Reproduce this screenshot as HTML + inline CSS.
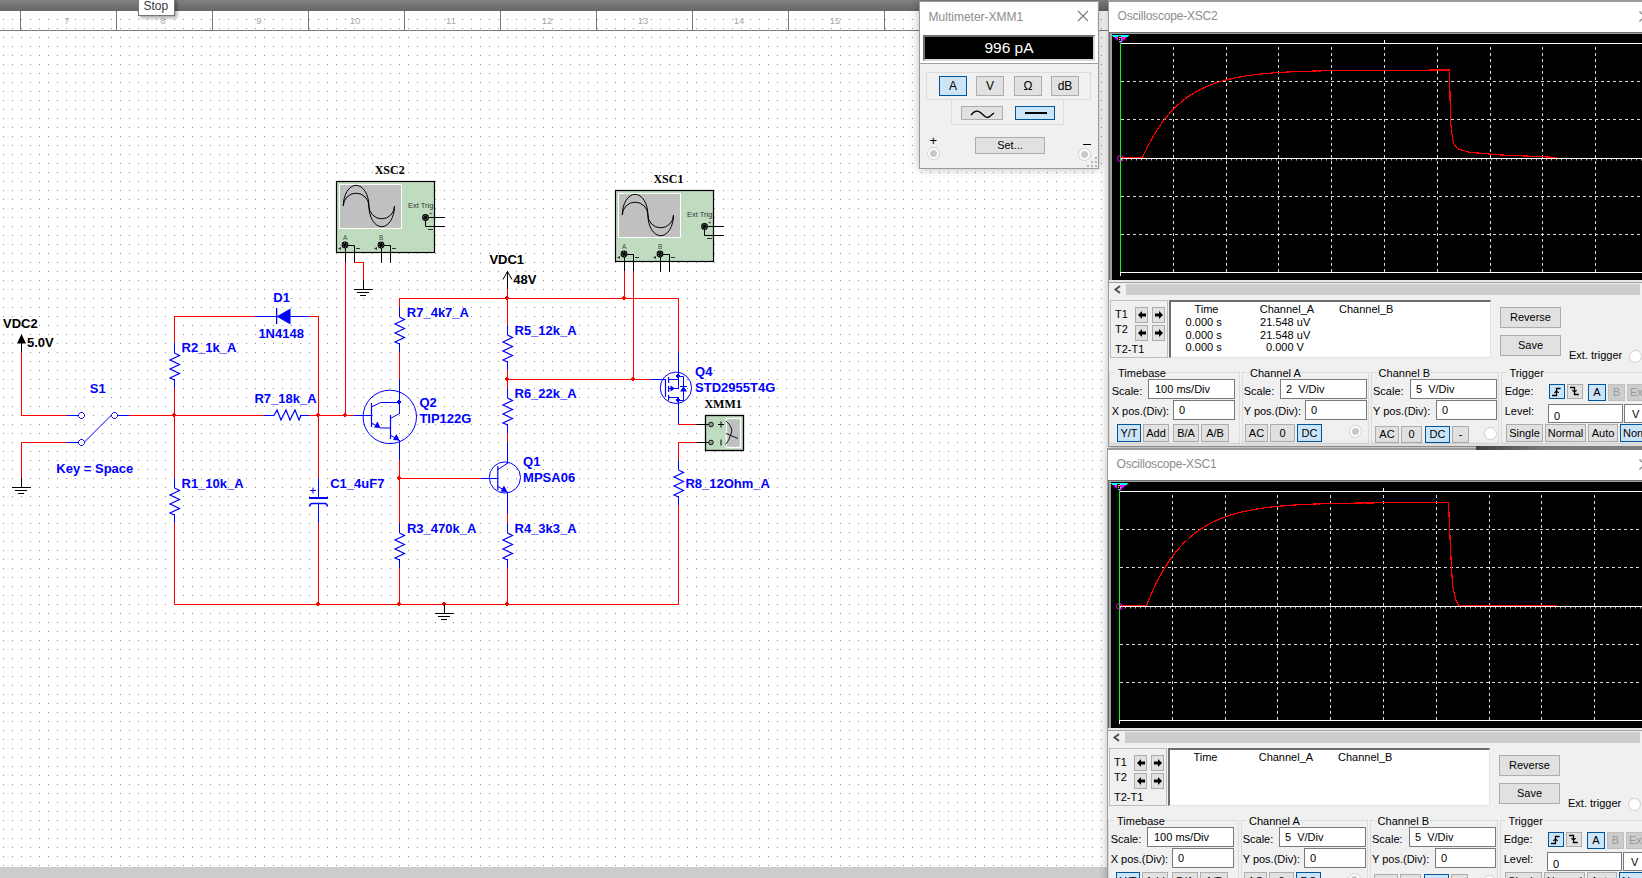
<!DOCTYPE html><html><head><meta charset="utf-8"><style>
html,body{margin:0;padding:0;}
body{width:1642px;height:878px;overflow:hidden;position:relative;background:#fff;font-family:"Liberation Sans",sans-serif;}
.win{position:absolute;background:#f0f0f0;box-sizing:border-box;box-shadow:0 0 9px rgba(0,0,0,0.28);overflow:hidden}
.wb{position:absolute;left:0;top:0;right:0;bottom:0;border:1px solid #9a9a9a;pointer-events:none}
.title{position:absolute;background:#fff}
.t{position:absolute;white-space:pre;font-family:"Liberation Sans",sans-serif;}
.b{position:absolute;box-sizing:border-box;background:#e1e1e1;border:1px solid #adadad;text-align:center;color:#000;font-family:"Liberation Sans",sans-serif;white-space:pre;overflow:hidden}
.b.sel{background:#cce4f7;border:1px solid #005499}
.b.dis{background:#cccccc;border:1px solid #bfbfbf;color:#9a9a9a}
.inp{position:absolute;box-sizing:border-box;background:#fff;border:1px solid #7a7a7a;font-size:11px;color:#000;white-space:pre}
.gb{position:absolute;box-sizing:border-box;border:1px solid #dcdcdc}
.gbgap{position:absolute;background:#f0f0f0}
.gp{position:absolute;box-sizing:border-box;border:1px solid #dcdcdc}
.panel{position:absolute;box-sizing:border-box;border:1px solid #bdbdbd}
.data{position:absolute;box-sizing:border-box;background:#fff;border-left:2px solid #6d6d6d;border-top:2px solid #6d6d6d;border-right:1px solid #e3e3e3;border-bottom:1px solid #e3e3e3}
.radio{position:absolute;box-sizing:border-box;width:13px;height:13px;border-radius:50%;background:#fff;border:1px solid #cfcfcf}
</style></head><body>
<svg width="1642" height="878" style="position:absolute;left:0;top:0">
<defs><linearGradient id="tb" x1="0" y1="0" x2="0" y2="1"><stop offset="0" stop-color="#828282"/><stop offset="1" stop-color="#666"/></linearGradient><pattern id="grid" width="9" height="9" patternUnits="userSpaceOnUse"><rect x="3" y="1" width="1" height="1" fill="#8e8e8e"/></pattern></defs>
<rect x="0" y="0" width="1642" height="878" fill="url(#grid)"/>
<rect x="0" y="0" width="1642" height="11" fill="url(#tb)"/>
<rect x="0" y="30" width="1642" height="1" fill="#7a7a7a"/>
<rect x="20" y="11" width="1" height="19" fill="#7a7a7a"/>
<text x="67" y="23.5" fill="#a8a8a8" font-family="Liberation Sans" font-size="9.5" text-anchor="middle">7</text>
<rect x="116" y="11" width="1" height="19" fill="#7a7a7a"/>
<text x="163" y="23.5" fill="#a8a8a8" font-family="Liberation Sans" font-size="9.5" text-anchor="middle">8</text>
<rect x="212" y="11" width="1" height="19" fill="#7a7a7a"/>
<text x="259" y="23.5" fill="#a8a8a8" font-family="Liberation Sans" font-size="9.5" text-anchor="middle">9</text>
<rect x="308" y="11" width="1" height="19" fill="#7a7a7a"/>
<text x="355" y="23.5" fill="#a8a8a8" font-family="Liberation Sans" font-size="9.5" text-anchor="middle">10</text>
<rect x="404" y="11" width="1" height="19" fill="#7a7a7a"/>
<text x="451" y="23.5" fill="#a8a8a8" font-family="Liberation Sans" font-size="9.5" text-anchor="middle">11</text>
<rect x="500" y="11" width="1" height="19" fill="#7a7a7a"/>
<text x="547" y="23.5" fill="#a8a8a8" font-family="Liberation Sans" font-size="9.5" text-anchor="middle">12</text>
<rect x="596" y="11" width="1" height="19" fill="#7a7a7a"/>
<text x="643" y="23.5" fill="#a8a8a8" font-family="Liberation Sans" font-size="9.5" text-anchor="middle">13</text>
<rect x="692" y="11" width="1" height="19" fill="#7a7a7a"/>
<text x="739" y="23.5" fill="#a8a8a8" font-family="Liberation Sans" font-size="9.5" text-anchor="middle">14</text>
<rect x="788" y="11" width="1" height="19" fill="#7a7a7a"/>
<text x="835" y="23.5" fill="#a8a8a8" font-family="Liberation Sans" font-size="9.5" text-anchor="middle">15</text>
<rect x="884" y="11" width="1" height="19" fill="#7a7a7a"/>
<text x="931" y="23.5" fill="#a8a8a8" font-family="Liberation Sans" font-size="9.5" text-anchor="middle">16</text>
<rect x="980" y="11" width="1" height="19" fill="#7a7a7a"/>
<text x="1027" y="23.5" fill="#a8a8a8" font-family="Liberation Sans" font-size="9.5" text-anchor="middle">17</text>
<rect x="1076" y="11" width="1" height="19" fill="#7a7a7a"/>
<text x="1123" y="23.5" fill="#a8a8a8" font-family="Liberation Sans" font-size="9.5" text-anchor="middle">18</text>
<rect x="0" y="867" width="1642" height="11" fill="#cdcdcd"/>
<text x="3" y="327.7" fill="#000000" font-family="Liberation Sans" font-size="13" font-weight="bold">VDC2</text>
<polygon points="21.5,334 17,343.5 26,343.5" fill="#000"/>
<polyline points="21.5,343.5 21.5,352.5" fill="none" stroke="#000000" stroke-width="1" stroke-linecap="square"/>
<text x="27" y="346.8" fill="#000000" font-family="Liberation Sans" font-size="13" font-weight="bold">5.0V</text>
<polyline points="21.5,352.5 21.5,415.5 66.5,415.5" fill="none" stroke="#ff0000" stroke-width="1" stroke-linecap="square"/>
<polyline points="67.5,415.5 78.5,415.5" fill="none" stroke="#0000ff" stroke-width="1" stroke-linecap="square"/>
<polygon points="78.5,414.5 80.5,412.5 82.5,412.5 84.5,414.5 84.5,416.5 82.5,418.5 80.5,418.5 78.5,416.5" fill="#fff" stroke="#0000ff" stroke-width="1"/>
<polygon points="111.5,414.5 113.5,412.5 115.5,412.5 117.5,414.5 117.5,416.5 115.5,418.5 113.5,418.5 111.5,416.5" fill="#fff" stroke="#0000ff" stroke-width="1"/>
<polygon points="78.5,441.5 80.5,439.5 82.5,439.5 84.5,441.5 84.5,443.5 82.5,445.5 80.5,445.5 78.5,443.5" fill="#fff" stroke="#0000ff" stroke-width="1"/>
<line x1="84.5" y1="442" x2="111.5" y2="415" stroke="#0000ff" stroke-width="1"/>
<polyline points="117.5,415.5 129.5,415.5" fill="none" stroke="#0000ff" stroke-width="1" stroke-linecap="square"/>
<polyline points="21.5,478.5 21.5,442.5 66.5,442.5" fill="none" stroke="#ff0000" stroke-width="1" stroke-linecap="square"/>
<polyline points="67.5,442.5 78.5,442.5" fill="none" stroke="#0000ff" stroke-width="1" stroke-linecap="square"/>
<polyline points="21.5,478.5 21.5,487.5" fill="none" stroke="#000000" stroke-width="1" stroke-linecap="square"/>
<rect x="12" y="487" width="19" height="1" fill="#000"/>
<rect x="15" y="490" width="12" height="1" fill="#000"/>
<rect x="18" y="493" width="6" height="1" fill="#000"/>
<text x="89.8" y="393.3" fill="#0000ff" font-family="Liberation Sans" font-size="13" font-weight="bold">S1</text>
<text x="56.3" y="473.2" fill="#0000ff" font-family="Liberation Sans" font-size="13" font-weight="bold">Key = Space</text>
<polyline points="129.5,415.5 264.5,415.5" fill="none" stroke="#ff0000" stroke-width="1" stroke-linecap="square"/>
<polyline points="264.5,415.5 273.5,415.5" fill="none" stroke="#0000ff" stroke-width="1" stroke-linecap="square"/>
<polyline points="274.0,415.5 277.0,410.0 281.0,420.0 286.0,410.0 290.0,420.0 295.0,410.0 299.0,420.0 301.0,415.5" fill="none" stroke="#0000ff" stroke-width="1.2"/>
<polyline points="300.5,415.5 309.5,415.5" fill="none" stroke="#0000ff" stroke-width="1" stroke-linecap="square"/>
<polyline points="309.5,415.5 354.5,415.5" fill="none" stroke="#ff0000" stroke-width="1" stroke-linecap="square"/>
<polyline points="174.5,316.5 174.5,343.5" fill="none" stroke="#ff0000" stroke-width="1" stroke-linecap="square"/>
<polyline points="174.5,343.5 174.5,352.5" fill="none" stroke="#0000ff" stroke-width="1" stroke-linecap="square"/>
<polyline points="174.5,353.0 179.5,355.5 170.0,360.0 179.5,364.5 170.0,369.0 179.5,373.5 170.0,378.0 174.5,380.0" fill="none" stroke="#0000ff" stroke-width="1.2"/>
<polyline points="174.5,379.5 174.5,388.5" fill="none" stroke="#0000ff" stroke-width="1" stroke-linecap="square"/>
<polyline points="174.5,388.5 174.5,478.5" fill="none" stroke="#ff0000" stroke-width="1" stroke-linecap="square"/>
<polyline points="174.5,478.5 174.5,487.5" fill="none" stroke="#0000ff" stroke-width="1" stroke-linecap="square"/>
<polyline points="174.5,488.0 179.5,490.5 170.0,495.0 179.5,499.5 170.0,504.0 179.5,508.5 170.0,513.0 174.5,515.0" fill="none" stroke="#0000ff" stroke-width="1.2"/>
<polyline points="174.5,514.5 174.5,523.5" fill="none" stroke="#0000ff" stroke-width="1" stroke-linecap="square"/>
<polyline points="174.5,523.5 174.5,604.5 678.5,604.5" fill="none" stroke="#ff0000" stroke-width="1" stroke-linecap="square"/>
<text x="181.5" y="352.3" fill="#0000ff" font-family="Liberation Sans" font-size="13" font-weight="bold">R2_1k_A</text>
<text x="181.5" y="487.5" fill="#0000ff" font-family="Liberation Sans" font-size="13" font-weight="bold">R1_10k_A</text>
<text x="254.4" y="403.3" fill="#0000ff" font-family="Liberation Sans" font-size="13" font-weight="bold">R7_18k_A</text>
<polyline points="174.5,316.5 255.5,316.5" fill="none" stroke="#ff0000" stroke-width="1" stroke-linecap="square"/>
<polyline points="255.5,316.5 309.5,316.5" fill="none" stroke="#0000ff" stroke-width="1" stroke-linecap="square"/>
<polygon points="276.5,316.5 290.5,308.5 290.5,324.5" fill="#0000ff"/>
<rect x="276" y="308" width="1.3" height="16" fill="#0000ff"/>
<polyline points="309.5,316.5 318.5,316.5 318.5,478.5" fill="none" stroke="#ff0000" stroke-width="1" stroke-linecap="square"/>
<text x="273.3" y="302" fill="#0000ff" font-family="Liberation Sans" font-size="13" font-weight="bold">D1</text>
<text x="258.4" y="337.9" fill="#0000ff" font-family="Liberation Sans" font-size="13" font-weight="bold">1N4148</text>
<polyline points="318.5,478.5 318.5,497.5" fill="none" stroke="#0000ff" stroke-width="1" stroke-linecap="square"/>
<rect x="309" y="497" width="19" height="2" fill="#0000ff"/>
<path d="M309.5,506.5 Q310,503.5 312,503.5 L325,503.5 Q327,503.5 327.5,506.5" fill="none" stroke="#0000ff" stroke-width="1.6"/>
<polyline points="318.5,504.5 318.5,523.5" fill="none" stroke="#0000ff" stroke-width="1" stroke-linecap="square"/>
<polyline points="318.5,523.5 318.5,604.5" fill="none" stroke="#ff0000" stroke-width="1" stroke-linecap="square"/>
<rect x="310" y="490" width="6" height="1" fill="#0000ff"/><rect x="312.5" y="487.5" width="1" height="6" fill="#0000ff"/>
<text x="330.2" y="487.5" fill="#0000ff" font-family="Liberation Sans" font-size="13" font-weight="bold">C1_4uF7</text>
<rect x="336.5" y="181.5" width="98" height="71" fill="#c0dcc0" stroke="#000" stroke-width="1.2"/>
<rect x="339.5" y="184.5" width="62" height="44" fill="#c0c0c0" stroke="#fff" stroke-width="1"/>
<path d="M343.3,206 A12.8,20.7 0 0 1 368.90000000000003,206 A12.8,20.7 0 0 0 394.5,206" fill="none" stroke="#000" stroke-width="1"/>
<path d="M343.3,206 A12.8,12.8 0 0 1 368.90000000000003,206 A12.8,12.8 0 0 0 394.5,206" fill="none" stroke="#000" stroke-width="1"/>
<text x="408" y="208" fill="#333" font-family="Liberation Sans" font-size="7.5">Ext Trig</text>
<polyline points="425.5,217.5 444.5,217.5" fill="none" stroke="#000000" stroke-width="1" stroke-linecap="square"/>
<polyline points="425.5,217.5 425.5,226.5 444.5,226.5" fill="none" stroke="#000000" stroke-width="1" stroke-linecap="square"/>
<circle cx="425.5" cy="217.5" r="3.4" fill="#000"/><circle cx="425.5" cy="217.5" r="2.1" fill="none" stroke="#d0d0d0" stroke-width="0.7" stroke-dasharray="1,1"/>
<text x="429" y="215" fill="#333" font-family="Liberation Sans" font-size="6">+</text>
<rect x="428" y="229" width="5" height="1" fill="#333"/>
<text x="343" y="240" fill="#444" font-family="Liberation Sans" font-size="6.5">A</text>
<polyline points="345.5,245.5 354.5,245.5 354.5,262.5" fill="none" stroke="#000000" stroke-width="1" stroke-linecap="square"/>
<polyline points="345.5,245.5 345.5,262.5" fill="none" stroke="#000000" stroke-width="1" stroke-linecap="square"/>
<circle cx="345" cy="245" r="3.4" fill="#000"/><circle cx="345" cy="245" r="2.1" fill="none" stroke="#d0d0d0" stroke-width="0.7" stroke-dasharray="1,1"/>
<polygon points="338,248.5 341,247 341,250" fill="#333"/>
<rect x="356" y="248" width="4" height="1" fill="#333"/>
<text x="379" y="240" fill="#444" font-family="Liberation Sans" font-size="6.5">B</text>
<polyline points="381.5,245.5 390.5,245.5 390.5,262.5" fill="none" stroke="#000000" stroke-width="1" stroke-linecap="square"/>
<polyline points="381.5,245.5 381.5,262.5" fill="none" stroke="#000000" stroke-width="1" stroke-linecap="square"/>
<circle cx="381" cy="245" r="3.4" fill="#000"/><circle cx="381" cy="245" r="2.1" fill="none" stroke="#d0d0d0" stroke-width="0.7" stroke-dasharray="1,1"/>
<polygon points="374,248.5 377,247 377,250" fill="#333"/>
<rect x="392" y="248" width="4" height="1" fill="#333"/>
<text x="374.7" y="173.9" fill="#000" font-family="Liberation Serif" font-size="12" font-weight="bold">XSC2</text>
<polyline points="345.5,262.5 345.5,415.5" fill="none" stroke="#ff0000" stroke-width="1" stroke-linecap="square"/>
<polyline points="354.5,262.5 363.5,262.5 363.5,280.5" fill="none" stroke="#ff0000" stroke-width="1" stroke-linecap="square"/>
<polyline points="363.5,280.5 363.5,289.5" fill="none" stroke="#000000" stroke-width="1" stroke-linecap="square"/>
<rect x="354" y="289" width="19" height="1" fill="#000"/>
<rect x="357" y="292" width="12" height="1" fill="#000"/>
<rect x="360" y="295" width="6" height="1" fill="#000"/>
<polyline points="399.5,298.5 678.5,298.5" fill="none" stroke="#ff0000" stroke-width="1" stroke-linecap="square"/>
<polyline points="399.5,298.5 399.5,307.5" fill="none" stroke="#ff0000" stroke-width="1" stroke-linecap="square"/>
<polyline points="399.5,307.5 399.5,316.5" fill="none" stroke="#0000ff" stroke-width="1" stroke-linecap="square"/>
<polyline points="399.5,317.0 404.5,319.5 395.0,324.0 404.5,328.5 395.0,333.0 404.5,337.5 395.0,342.0 399.5,344.0" fill="none" stroke="#0000ff" stroke-width="1.2"/>
<polyline points="399.5,343.5 399.5,352.5" fill="none" stroke="#0000ff" stroke-width="1" stroke-linecap="square"/>
<polyline points="399.5,352.5 399.5,379.5" fill="none" stroke="#ff0000" stroke-width="1" stroke-linecap="square"/>
<text x="406.8" y="317" fill="#0000ff" font-family="Liberation Sans" font-size="13" font-weight="bold">R7_4k7_A</text>
<circle cx="389.8" cy="416.9" r="26.7" fill="none" stroke="#0000ff" stroke-width="1"/>
<polyline points="354.5,415.5 371.5,415.5" fill="none" stroke="#0000ff" stroke-width="1" stroke-linecap="square"/>
<line x1="371.5" y1="403" x2="371.5" y2="427" stroke="#0000ff" stroke-width="1.2"/>
<polyline points="399.5,379.5 399.5,413.5" fill="none" stroke="#0000ff" stroke-width="1" stroke-linecap="square"/>
<polyline points="371.5,407 380.5,402.5 399.5,402.5" fill="none" stroke="#0000ff" stroke-width="1"/>
<line x1="399.5" y1="413.5" x2="390" y2="418.7" stroke="#0000ff" stroke-width="1"/>
<line x1="390.5" y1="415" x2="390.5" y2="439" stroke="#0000ff" stroke-width="1.2"/>
<polyline points="371.5,423 380.5,428 390.5,428" fill="none" stroke="#0000ff" stroke-width="1"/>
<polygon points="380.5,428 374,427.5 377.5,421.5" fill="#0000ff"/>
<line x1="390.5" y1="435.3" x2="399.5" y2="440.5" stroke="#0000ff" stroke-width="1"/>
<polygon points="399.5,440.5 393,440 396.5,434" fill="#0000ff"/>
<rect x="398" y="400" width="2" height="4" fill="#0000ff"/><rect x="397" y="401" width="4" height="2" fill="#0000ff"/>
<polyline points="399.5,440.5 399.5,460.5" fill="none" stroke="#0000ff" stroke-width="1" stroke-linecap="square"/>
<polyline points="399.5,460.5 399.5,523.5" fill="none" stroke="#ff0000" stroke-width="1" stroke-linecap="square"/>
<polyline points="399.5,523.5 399.5,532.5" fill="none" stroke="#0000ff" stroke-width="1" stroke-linecap="square"/>
<polyline points="399.5,533.0 404.5,535.5 395.0,540.0 404.5,544.5 395.0,549.0 404.5,553.5 395.0,558.0 399.5,560.0" fill="none" stroke="#0000ff" stroke-width="1.2"/>
<polyline points="399.5,559.5 399.5,568.5" fill="none" stroke="#0000ff" stroke-width="1" stroke-linecap="square"/>
<polyline points="399.5,568.5 399.5,604.5" fill="none" stroke="#ff0000" stroke-width="1" stroke-linecap="square"/>
<text x="419.4" y="407.2" fill="#0000ff" font-family="Liberation Sans" font-size="13" font-weight="bold">Q2</text>
<text x="419.4" y="423.3" fill="#0000ff" font-family="Liberation Sans" font-size="13" font-weight="bold">TIP122G</text>
<text x="406.9" y="532.5" fill="#0000ff" font-family="Liberation Sans" font-size="13" font-weight="bold">R3_470k_A</text>
<polyline points="399.5,478.5 481.5,478.5" fill="none" stroke="#ff0000" stroke-width="1" stroke-linecap="square"/>
<polyline points="481.5,478.5 497.5,478.5" fill="none" stroke="#0000ff" stroke-width="1" stroke-linecap="square"/>
<text x="489.4" y="264.3" fill="#000000" font-family="Liberation Sans" font-size="13" font-weight="bold">VDC1</text>
<polyline points="503,279.5 507.5,271.5 512,279.5" fill="none" stroke="#000" stroke-width="1"/>
<polyline points="507.5,271.5 507.5,289.5" fill="none" stroke="#000000" stroke-width="1" stroke-linecap="square"/>
<polyline points="507.5,289.5 507.5,298.5" fill="none" stroke="#ff0000" stroke-width="1" stroke-linecap="square"/>
<text x="513.3" y="283.5" fill="#000000" font-family="Liberation Sans" font-size="13" font-weight="bold">48V</text>
<polyline points="507.5,298.5 507.5,325.5" fill="none" stroke="#ff0000" stroke-width="1" stroke-linecap="square"/>
<polyline points="507.5,325.5 507.5,334.5" fill="none" stroke="#0000ff" stroke-width="1" stroke-linecap="square"/>
<polyline points="507.5,335.0 512.5,337.5 503.0,342.0 512.5,346.5 503.0,351.0 512.5,355.5 503.0,360.0 507.5,362.0" fill="none" stroke="#0000ff" stroke-width="1.2"/>
<polyline points="507.5,361.5 507.5,370.5" fill="none" stroke="#0000ff" stroke-width="1" stroke-linecap="square"/>
<polyline points="507.5,370.5 507.5,388.5" fill="none" stroke="#ff0000" stroke-width="1" stroke-linecap="square"/>
<polyline points="507.5,388.5 507.5,397.5" fill="none" stroke="#0000ff" stroke-width="1" stroke-linecap="square"/>
<polyline points="507.5,398.0 512.5,400.5 503.0,405.0 512.5,409.5 503.0,414.0 512.5,418.5 503.0,423.0 507.5,425.0" fill="none" stroke="#0000ff" stroke-width="1.2"/>
<polyline points="507.5,424.5 507.5,433.5" fill="none" stroke="#0000ff" stroke-width="1" stroke-linecap="square"/>
<polyline points="507.5,433.5 507.5,442.5" fill="none" stroke="#ff0000" stroke-width="1" stroke-linecap="square"/>
<polyline points="507.5,442.5 507.5,463.5" fill="none" stroke="#0000ff" stroke-width="1" stroke-linecap="square"/>
<text x="514.5" y="335.3" fill="#0000ff" font-family="Liberation Sans" font-size="13" font-weight="bold">R5_12k_A</text>
<text x="514.5" y="398.3" fill="#0000ff" font-family="Liberation Sans" font-size="13" font-weight="bold">R6_22k_A</text>
<circle cx="504.9" cy="477.5" r="15.6" fill="none" stroke="#0000ff" stroke-width="1"/>
<line x1="497.8" y1="466" x2="497.8" y2="490" stroke="#0000ff" stroke-width="1.2"/>
<line x1="497.8" y1="469.6" x2="507.5" y2="463.2" stroke="#0000ff" stroke-width="1"/>
<line x1="497.8" y1="486.3" x2="507.5" y2="492.2" stroke="#0000ff" stroke-width="1"/>
<polygon points="507.5,492.2 500.5,491.5 504,485.5" fill="#0000ff"/>
<polyline points="507.5,492.5 507.5,514.5" fill="none" stroke="#0000ff" stroke-width="1" stroke-linecap="square"/>
<polyline points="507.5,514.5 507.5,523.5" fill="none" stroke="#ff0000" stroke-width="1" stroke-linecap="square"/>
<polyline points="507.5,523.5 507.5,532.5" fill="none" stroke="#0000ff" stroke-width="1" stroke-linecap="square"/>
<polyline points="507.5,533.0 512.5,535.5 503.0,540.0 512.5,544.5 503.0,549.0 512.5,553.5 503.0,558.0 507.5,560.0" fill="none" stroke="#0000ff" stroke-width="1.2"/>
<polyline points="507.5,559.5 507.5,568.5" fill="none" stroke="#0000ff" stroke-width="1" stroke-linecap="square"/>
<polyline points="507.5,568.5 507.5,604.5" fill="none" stroke="#ff0000" stroke-width="1" stroke-linecap="square"/>
<text x="523.1" y="465.7" fill="#0000ff" font-family="Liberation Sans" font-size="13" font-weight="bold">Q1</text>
<text x="523.1" y="481.6" fill="#0000ff" font-family="Liberation Sans" font-size="13" font-weight="bold">MPSA06</text>
<text x="514.5" y="532.5" fill="#0000ff" font-family="Liberation Sans" font-size="13" font-weight="bold">R4_3k3_A</text>
<polyline points="507.5,379.5 633.5,379.5" fill="none" stroke="#ff0000" stroke-width="1" stroke-linecap="square"/>
<rect x="615.5" y="190.5" width="98" height="71" fill="#c0dcc0" stroke="#000" stroke-width="1.2"/>
<rect x="618.5" y="193.5" width="62" height="44" fill="#c0c0c0" stroke="#fff" stroke-width="1"/>
<path d="M622.3,215 A12.8,20.7 0 0 1 647.9,215 A12.8,20.7 0 0 0 673.5,215" fill="none" stroke="#000" stroke-width="1"/>
<path d="M622.3,215 A12.8,12.8 0 0 1 647.9,215 A12.8,12.8 0 0 0 673.5,215" fill="none" stroke="#000" stroke-width="1"/>
<text x="687" y="217" fill="#333" font-family="Liberation Sans" font-size="7.5">Ext Trig</text>
<polyline points="704.5,226.5 723.5,226.5" fill="none" stroke="#000000" stroke-width="1" stroke-linecap="square"/>
<polyline points="704.5,226.5 704.5,235.5 723.5,235.5" fill="none" stroke="#000000" stroke-width="1" stroke-linecap="square"/>
<circle cx="704.5" cy="226.5" r="3.4" fill="#000"/><circle cx="704.5" cy="226.5" r="2.1" fill="none" stroke="#d0d0d0" stroke-width="0.7" stroke-dasharray="1,1"/>
<text x="708" y="224" fill="#333" font-family="Liberation Sans" font-size="6">+</text>
<rect x="707" y="238" width="5" height="1" fill="#333"/>
<text x="622" y="249" fill="#444" font-family="Liberation Sans" font-size="6.5">A</text>
<polyline points="624.5,254.5 633.5,254.5 633.5,271.5" fill="none" stroke="#000000" stroke-width="1" stroke-linecap="square"/>
<polyline points="624.5,254.5 624.5,271.5" fill="none" stroke="#000000" stroke-width="1" stroke-linecap="square"/>
<circle cx="624" cy="254" r="3.4" fill="#000"/><circle cx="624" cy="254" r="2.1" fill="none" stroke="#d0d0d0" stroke-width="0.7" stroke-dasharray="1,1"/>
<polygon points="617,257.5 620,256 620,259" fill="#333"/>
<rect x="635" y="257" width="4" height="1" fill="#333"/>
<text x="658" y="249" fill="#444" font-family="Liberation Sans" font-size="6.5">B</text>
<polyline points="660.5,254.5 669.5,254.5 669.5,271.5" fill="none" stroke="#000000" stroke-width="1" stroke-linecap="square"/>
<polyline points="660.5,254.5 660.5,271.5" fill="none" stroke="#000000" stroke-width="1" stroke-linecap="square"/>
<circle cx="660" cy="254" r="3.4" fill="#000"/><circle cx="660" cy="254" r="2.1" fill="none" stroke="#d0d0d0" stroke-width="0.7" stroke-dasharray="1,1"/>
<polygon points="653,257.5 656,256 656,259" fill="#333"/>
<rect x="671" y="257" width="4" height="1" fill="#333"/>
<text x="653.4" y="182.9" fill="#000" font-family="Liberation Serif" font-size="12" font-weight="bold">XSC1</text>
<polyline points="624.5,271.5 624.5,298.5" fill="none" stroke="#ff0000" stroke-width="1" stroke-linecap="square"/>
<polyline points="633.5,271.5 633.5,379.5" fill="none" stroke="#ff0000" stroke-width="1" stroke-linecap="square"/>
<polyline points="633.5,379.5 651.5,379.5" fill="none" stroke="#ff0000" stroke-width="1" stroke-linecap="square"/>
<polyline points="651.5,379.5 665.5,379.5" fill="none" stroke="#0000ff" stroke-width="1" stroke-linecap="square"/>
<circle cx="675.9" cy="387.8" r="15.7" fill="none" stroke="#0000ff" stroke-width="1"/>
<polyline points="678.5,298.5 678.5,352.5" fill="none" stroke="#ff0000" stroke-width="1" stroke-linecap="square"/>
<polyline points="678.5,352.5 678.5,388.5" fill="none" stroke="#0000ff" stroke-width="1" stroke-linecap="square"/>
<line x1="665.5" y1="379" x2="665.5" y2="397" stroke="#0000ff" stroke-width="1.2"/>
<line x1="668.6" y1="377" x2="668.6" y2="383" stroke="#0000ff" stroke-width="1.2"/>
<line x1="668.6" y1="386" x2="668.6" y2="392" stroke="#0000ff" stroke-width="1.2"/>
<line x1="668.6" y1="395" x2="668.6" y2="400.5" stroke="#0000ff" stroke-width="1.2"/>
<polyline points="668.5,379.5 678.5,379.5" fill="none" stroke="#0000ff" stroke-width="1" stroke-linecap="square"/>
<polyline points="668.5,388.5 678.5,388.5" fill="none" stroke="#0000ff" stroke-width="1" stroke-linecap="square"/>
<polygon points="675,388.5 670.5,385.5 670.5,391.5" fill="#0000ff"/>
<polyline points="668.5,397.5 678.5,397.5" fill="none" stroke="#0000ff" stroke-width="1" stroke-linecap="square"/>
<polyline points="678.5,376.5 683.5,376.5 683.5,400.5 678.5,400.5" fill="none" stroke="#0000ff" stroke-width="1" stroke-linecap="square"/>
<polygon points="683.5,386.5 680,391.5 687,391.5" fill="#0000ff"/>
<rect x="680" y="386" width="7" height="1" fill="#0000ff"/>
<rect x="677" y="374" width="2" height="4" fill="#0000ff"/><rect x="676" y="375" width="4" height="2" fill="#0000ff"/>
<rect x="677" y="398" width="2" height="4" fill="#0000ff"/><rect x="676" y="399" width="4" height="2" fill="#0000ff"/>
<polyline points="678.5,397.5 678.5,424.5" fill="none" stroke="#0000ff" stroke-width="1" stroke-linecap="square"/>
<polyline points="678.5,424.5 696.5,424.5" fill="none" stroke="#ff0000" stroke-width="1" stroke-linecap="square"/>
<polyline points="696.5,442.5 678.5,442.5 678.5,460.5" fill="none" stroke="#ff0000" stroke-width="1" stroke-linecap="square"/>
<polyline points="678.5,460.5 678.5,469.5" fill="none" stroke="#0000ff" stroke-width="1" stroke-linecap="square"/>
<polyline points="678.5,470.0 683.5,472.5 674.0,477.0 683.5,481.5 674.0,486.0 683.5,490.5 674.0,495.0 678.5,497.0" fill="none" stroke="#0000ff" stroke-width="1.2"/>
<polyline points="678.5,496.5 678.5,505.5" fill="none" stroke="#0000ff" stroke-width="1" stroke-linecap="square"/>
<polyline points="678.5,505.5 678.5,604.5" fill="none" stroke="#ff0000" stroke-width="1" stroke-linecap="square"/>
<text x="695.1" y="375.8" fill="#0000ff" font-family="Liberation Sans" font-size="13" font-weight="bold">Q4</text>
<text x="695.1" y="391.7" fill="#0000ff" font-family="Liberation Sans" font-size="13" font-weight="bold">STD2955T4G</text>
<text x="685.4" y="488" fill="#0000ff" font-family="Liberation Sans" font-size="13" font-weight="bold">R8_12Ohm_A</text>
<text x="704.4" y="407.7" fill="#000" font-family="Liberation Serif" font-size="12" font-weight="bold">XMM1</text>
<rect x="705.5" y="415.5" width="38" height="35" fill="#c0dcc0" stroke="#000" stroke-width="1.3"/>
<rect x="726.5" y="418.5" width="14" height="29" fill="#c0c0c0" stroke="#fff" stroke-width="1.3"/>
<path d="M726,421 Q734,428 731,434 Q729,441 725.5,444.5" fill="none" stroke="#000" stroke-width="0.9"/>
<line x1="726" y1="433.5" x2="738" y2="438.5" stroke="#000" stroke-width="0.9"/>
<polyline points="696.5,424.5 711.5,424.5" fill="none" stroke="#000000" stroke-width="1" stroke-linecap="square"/>
<polyline points="711.5,442.5 696.5,442.5" fill="none" stroke="#000000" stroke-width="1" stroke-linecap="square"/>
<circle cx="711" cy="424.5" r="2.3" fill="#999" stroke="#000" stroke-width="0.9"/>
<circle cx="711" cy="442.5" r="2.3" fill="#999" stroke="#000" stroke-width="0.9"/>
<rect x="718" y="424" width="6" height="1" fill="#000"/><rect x="720.5" y="421.5" width="1" height="6" fill="#000"/>
<rect x="720.5" y="439.5" width="1" height="6" fill="#000"/>
<rect x="173" y="413" width="2" height="4" fill="#ff0000"/><rect x="172" y="414" width="4" height="2" fill="#ff0000"/>
<rect x="317" y="413" width="2" height="4" fill="#ff0000"/><rect x="316" y="414" width="4" height="2" fill="#ff0000"/>
<rect x="344" y="413" width="2" height="4" fill="#ff0000"/><rect x="343" y="414" width="4" height="2" fill="#ff0000"/>
<rect x="398" y="476" width="2" height="4" fill="#ff0000"/><rect x="397" y="477" width="4" height="2" fill="#ff0000"/>
<rect x="317" y="602" width="2" height="4" fill="#ff0000"/><rect x="316" y="603" width="4" height="2" fill="#ff0000"/>
<rect x="398" y="602" width="2" height="4" fill="#ff0000"/><rect x="397" y="603" width="4" height="2" fill="#ff0000"/>
<rect x="443" y="602" width="2" height="4" fill="#ff0000"/><rect x="442" y="603" width="4" height="2" fill="#ff0000"/>
<rect x="506" y="602" width="2" height="4" fill="#ff0000"/><rect x="505" y="603" width="4" height="2" fill="#ff0000"/>
<rect x="506" y="296" width="2" height="4" fill="#ff0000"/><rect x="505" y="297" width="4" height="2" fill="#ff0000"/>
<rect x="623" y="296" width="2" height="4" fill="#ff0000"/><rect x="622" y="297" width="4" height="2" fill="#ff0000"/>
<rect x="506" y="377" width="2" height="4" fill="#ff0000"/><rect x="505" y="378" width="4" height="2" fill="#ff0000"/>
<rect x="632" y="377" width="2" height="4" fill="#ff0000"/><rect x="631" y="378" width="4" height="2" fill="#ff0000"/>
<polyline points="444.5,604.5 444.5,613.5" fill="none" stroke="#000000" stroke-width="1" stroke-linecap="square"/>
<rect x="435" y="613" width="19" height="1" fill="#000"/>
<rect x="438" y="616" width="12" height="1" fill="#000"/>
<rect x="441" y="619" width="6" height="1" fill="#000"/>
</svg>
<div style="position:absolute;left:138px;top:-1px;width:37px;height:17px;background:#fff;border:1px solid #767676;box-sizing:border-box;box-shadow:2px 2px 3px rgba(0,0,0,0.35)"></div>
<div class="t" style="left:143.5px;top:-0.24px;font-size:12px;line-height:13.80px;color:#3a3a3a;">Stop</div>
<div class="win" style="left:919px;top:1px;width:180px;height:168px">
<div class="title" style="left:0;top:1px;width:178px;height:30px"></div>
<div class="t" style="left:9.6px;top:9.96px;font-size:12px;line-height:13.80px;color:#8c8c8c;">Multimeter-XMM1</div>
<svg style="position:absolute;left:158px;top:9px" width="12" height="12"><path d="M1,1 L11,11 M11,1 L1,11" stroke="#7a7a7a" stroke-width="1.1"/></svg>
<div style="position:absolute;left:1px;top:31px;width:178px;height:31px;background:#fff"></div>
<div style="position:absolute;left:4px;top:34px;width:172px;height:26px;box-sizing:border-box;border-top:2px solid #707070;border-left:2px solid #707070;border-right:2px solid #d8d8d8;border-bottom:2px solid #d8d8d8;background:#000"></div>
<div class="t" style="left:6px;top:36px;width:168px;height:22px;text-align:center;color:#fff;font-size:15.5px;line-height:21px">996 pA</div>
<div style="position:absolute;left:1px;top:62px;width:178px;height:1px;background:#a0a0a0"></div>
<div class="gp" style="left:7px;top:71px;width:165px;height:28px"></div>
<div class="gp" style="left:32px;top:99px;width:113px;height:25px;border-top:none"></div>
<div class="b sel" style="left:20px;top:75px;width:28px;height:20px;line-height:18px;font-size:12px;">A</div>
<div class="b" style="left:57px;top:75px;width:28px;height:20px;line-height:18px;font-size:12px;">V</div>
<div class="b" style="left:95px;top:75px;width:28px;height:20px;line-height:18px;font-size:12px;">&Omega;</div>
<div class="b" style="left:132px;top:75px;width:28px;height:20px;line-height:18px;font-size:12px;">dB</div>
<div class="b" style="left:42px;top:105px;width:42px;height:14px;line-height:12px;font-size:11px;"><svg style="position:absolute;left:8px;top:1px" width="26" height="12"><path d="M1,7 Q6,0.5 11,5 L15,8.5 Q17,10 19,9 L24,5" fill="none" stroke="#000" stroke-width="1.4"/></svg></div>
<div class="b sel" style="left:96px;top:105px;width:40px;height:14px;line-height:12px;font-size:11px;"><div style="position:absolute;left:9px;top:5px;width:22px;height:2px;background:#000"></div></div>
<div class="b" style="left:56px;top:136px;width:70px;height:17px;line-height:15px;font-size:11px;">Set...</div>
<div class="t" style="left:10.5px;top:133.04px;font-size:13px;line-height:14.95px;color:#000;">+</div>
<div style="position:absolute;left:164px;top:143px;width:8px;height:1px;background:#000"></div>
<div class="radio" style="left:7.800000000000001px;top:146.0px"><div style="position:absolute;left:2px;top:2px;width:7px;height:7px;border-radius:50%;background:#c8c8c8"></div></div>
<div class="radio" style="left:159.0px;top:146.9px"><div style="position:absolute;left:2px;top:2px;width:7px;height:7px;border-radius:50%;background:#c8c8c8"></div></div>
<div style="position:absolute;left:176px;top:156px;width:2px;height:2px;background:#b5b5b5"></div>
<div style="position:absolute;left:172px;top:160px;width:2px;height:2px;background:#b5b5b5"></div>
<div style="position:absolute;left:176px;top:160px;width:2px;height:2px;background:#b5b5b5"></div>
<div style="position:absolute;left:168px;top:164px;width:2px;height:2px;background:#b5b5b5"></div>
<div style="position:absolute;left:172px;top:164px;width:2px;height:2px;background:#b5b5b5"></div>
<div style="position:absolute;left:176px;top:164px;width:2px;height:2px;background:#b5b5b5"></div>
<div class="wb"></div>
</div>
<div class="win" style="left:1108px;top:0px;width:554px;height:447px">
<div class="title" style="left:1px;top:2px;width:554px;height:30px"></div>
<div class="t" style="left:9.5px;top:9.96px;font-size:12px;line-height:13.80px;color:#8c8c8c;letter-spacing:-0.2px;">Oscilloscope-XSC2</div>
<div style="position:absolute;left:1px;top:32px;width:554px;height:251px;background:#a0a0a0;border-top:1px solid #6e6e6e;border-left:1px solid #6e6e6e;box-sizing:border-box"></div>
<div style="position:absolute;left:4px;top:34px;width:554px;height:246px;overflow:hidden"><svg width="554" height="246" style="position:absolute;left:0;top:0"><rect x="0" y="0" width="554" height="246" fill="#000"/><line x1="61.5" y1="13" x2="61.5" y2="238" stroke="#d8d8d8" stroke-width="1" stroke-dasharray="3,3"/><line x1="114.5" y1="13" x2="114.5" y2="238" stroke="#d8d8d8" stroke-width="1" stroke-dasharray="3,3"/><line x1="166.5" y1="13" x2="166.5" y2="238" stroke="#d8d8d8" stroke-width="1" stroke-dasharray="3,3"/><line x1="219.5" y1="13" x2="219.5" y2="238" stroke="#d8d8d8" stroke-width="1" stroke-dasharray="3,3"/><line x1="272.5" y1="13" x2="272.5" y2="238" stroke="#d8d8d8" stroke-width="1" stroke-dasharray="3,3"/><line x1="325.5" y1="13" x2="325.5" y2="238" stroke="#d8d8d8" stroke-width="1" stroke-dasharray="3,3"/><line x1="378.5" y1="13" x2="378.5" y2="238" stroke="#d8d8d8" stroke-width="1" stroke-dasharray="3,3"/><line x1="430.5" y1="13" x2="430.5" y2="238" stroke="#d8d8d8" stroke-width="1" stroke-dasharray="3,3"/><line x1="483.5" y1="13" x2="483.5" y2="238" stroke="#d8d8d8" stroke-width="1" stroke-dasharray="3,3"/><line x1="536.5" y1="13" x2="536.5" y2="238" stroke="#d8d8d8" stroke-width="1" stroke-dasharray="3,3"/><line x1="9" y1="47.5" x2="554" y2="47.5" stroke="#d8d8d8" stroke-width="1" stroke-dasharray="3,3"/><line x1="9" y1="85.5" x2="554" y2="85.5" stroke="#d8d8d8" stroke-width="1" stroke-dasharray="3,3"/><line x1="9" y1="162.5" x2="554" y2="162.5" stroke="#d8d8d8" stroke-width="1" stroke-dasharray="3,3"/><line x1="9" y1="200.5" x2="554" y2="200.5" stroke="#d8d8d8" stroke-width="1" stroke-dasharray="3,3"/><rect x="9" y="9" width="554" height="1" fill="#fff"/><rect x="9" y="238" width="554" height="1" fill="#fff"/><rect x="272" y="6" width="1" height="3" fill="#fff"/><rect x="9" y="124" width="554" height="1" fill="#fff"/><path d="M9.5,125 v1.5 M14.5,125 v1.5 M19.5,125 v1.5 M24.5,125 v1.5 M29.5,125 v1.5 M34.5,125 v1.5 M39.5,125 v1.5 M44.5,125 v1.5 M49.5,125 v1.5 M54.5,125 v1.5 M59.5,125 v1.5 M64.5,125 v1.5 M69.5,125 v1.5 M74.5,125 v1.5 M79.5,125 v1.5 M84.5,125 v1.5 M89.5,125 v1.5 M94.5,125 v1.5 M99.5,125 v1.5 M104.5,125 v1.5 M109.5,125 v1.5 M114.5,125 v1.5 M119.5,125 v1.5 M124.5,125 v1.5 M129.5,125 v1.5 M134.5,125 v1.5 M139.5,125 v1.5 M144.5,125 v1.5 M149.5,125 v1.5 M154.5,125 v1.5 M159.5,125 v1.5 M164.5,125 v1.5 M169.5,125 v1.5 M174.5,125 v1.5 M179.5,125 v1.5 M184.5,125 v1.5 M189.5,125 v1.5 M194.5,125 v1.5 M199.5,125 v1.5 M204.5,125 v1.5 M209.5,125 v1.5 M214.5,125 v1.5 M219.5,125 v1.5 M224.5,125 v1.5 M229.5,125 v1.5 M234.5,125 v1.5 M239.5,125 v1.5 M244.5,125 v1.5 M249.5,125 v1.5 M254.5,125 v1.5 M259.5,125 v1.5 M264.5,125 v1.5 M269.5,125 v1.5 M274.5,125 v1.5 M279.5,125 v1.5 M284.5,125 v1.5 M289.5,125 v1.5 M294.5,125 v1.5 M299.5,125 v1.5 M304.5,125 v1.5 M309.5,125 v1.5 M314.5,125 v1.5 M319.5,125 v1.5 M324.5,125 v1.5 M329.5,125 v1.5 M334.5,125 v1.5 M339.5,125 v1.5 M344.5,125 v1.5 M349.5,125 v1.5 M354.5,125 v1.5 M359.5,125 v1.5 M364.5,125 v1.5 M369.5,125 v1.5 M374.5,125 v1.5 M379.5,125 v1.5 M384.5,125 v1.5 M389.5,125 v1.5 M394.5,125 v1.5 M399.5,125 v1.5 M404.5,125 v1.5 M409.5,125 v1.5 M414.5,125 v1.5 M419.5,125 v1.5 M424.5,125 v1.5 M429.5,125 v1.5 M434.5,125 v1.5 M439.5,125 v1.5 M444.5,125 v1.5 M449.5,125 v1.5 M454.5,125 v1.5 M459.5,125 v1.5 M464.5,125 v1.5 M469.5,125 v1.5 M474.5,125 v1.5 M479.5,125 v1.5 M484.5,125 v1.5 M489.5,125 v1.5 M494.5,125 v1.5 M499.5,125 v1.5 M504.5,125 v1.5 M509.5,125 v1.5 M514.5,125 v1.5 M519.5,125 v1.5 M524.5,125 v1.5 M529.5,125 v1.5 M534.5,125 v1.5 M539.5,125 v1.5 M544.5,125 v1.5 M549.5,125 v1.5 M554.5,125 v1.5 " stroke="#bbb" stroke-width="1"/><rect x="8" y="9" width="1" height="229" fill="#00ff00"/><rect x="8" y="238" width="1" height="4" fill="#fff"/><polyline points="8.5,123.5 30.5,123.5 31.5,121.3 32.5,119.1 33.5,116.9 34.5,114.9 35.5,112.8 36.5,110.9 37.5,109.0 38.5,107.1 39.5,105.3 40.5,103.5 41.5,101.8 42.5,100.1 43.5,98.4 44.5,96.8 45.5,95.3 46.5,93.7 47.5,92.3 48.5,90.8 49.5,89.4 50.5,88.0 51.5,86.7 52.5,85.4 53.5,84.1 54.5,82.9 55.5,81.7 56.5,80.5 57.5,79.4 58.5,78.3 59.5,77.2 60.5,76.1 61.5,75.1 62.5,74.1 63.5,73.1 64.5,72.2 65.5,71.3 66.5,70.3 67.5,69.5 68.5,68.6 69.5,67.8 70.5,67.0 71.5,66.2 72.5,65.4 73.5,64.6 74.5,63.9 75.5,63.2 76.5,62.5 77.5,61.8 78.5,61.2 79.5,60.5 80.5,59.9 81.5,59.3 82.5,58.7 83.5,58.1 84.5,57.5 85.5,57.0 86.5,56.4 87.5,55.9 88.5,55.4 89.5,54.9 90.5,54.4 91.5,53.9 92.5,53.5 93.5,53.0 94.5,52.6 95.5,52.2 96.5,51.8 97.5,51.4 98.5,51.0 99.5,50.6 100.5,50.2 101.5,49.8 102.5,49.5 103.5,49.1 104.5,48.8 105.5,48.5 106.5,48.2 107.5,47.8 108.5,47.5 109.5,47.2 110.5,47.0 111.5,46.7 112.5,46.4 113.5,46.1 114.5,45.9 115.5,45.6 116.5,45.4 117.5,45.1 118.5,44.9 119.5,44.7 120.5,44.4 121.5,44.2 122.5,44.0 123.5,43.8 124.5,43.6 125.5,43.4 126.5,43.2 127.5,43.0 128.5,42.9 129.5,42.7 130.5,42.5 131.5,42.3 132.5,42.2 133.5,42.0 134.5,41.9 135.5,41.7 136.5,41.6 137.5,41.4 138.5,41.3 139.5,41.2 140.5,41.0 141.5,40.9 142.5,40.8 143.5,40.6 144.5,40.5 145.5,40.4 146.5,40.3 147.5,40.2 148.5,40.1 149.5,40.0 150.5,39.9 151.5,39.8 152.5,39.7 153.5,39.6 154.5,39.5 155.5,39.4 156.5,39.3 157.5,39.2 158.5,39.1 159.5,39.1 160.5,39.0 161.5,38.9 162.5,38.8 163.5,38.8 164.5,38.7 165.5,38.6 166.5,38.6 167.5,38.5 168.5,38.4 169.5,38.4 170.5,38.3 171.5,38.2 172.5,38.2 173.5,38.1 174.5,38.1 175.5,38.0 176.5,38.0 177.5,37.9 178.5,37.9 179.5,37.8 180.5,37.8 181.5,37.7 182.5,37.7 183.5,37.6 184.5,37.6 185.5,37.6 186.5,37.5 187.5,37.5 188.5,37.4 189.5,37.4 190.5,37.4 191.5,37.3 192.5,37.3 193.5,37.3 194.5,37.2 195.5,37.2 196.5,37.2 197.5,37.1 198.5,37.1 199.5,37.1 200.5,37.1 201.5,37.0 202.5,37.0 203.5,37.0 204.5,37.0 205.5,36.9 206.5,36.9 207.5,36.9 208.5,36.9 209.5,36.8 210.5,36.8 211.5,36.8 212.5,36.8 213.5,36.8 214.5,36.7 215.5,36.7 216.5,36.7 217.5,36.7 218.5,36.7 219.5,36.6 220.5,36.6 221.5,36.6 222.5,36.6 223.5,36.6 224.5,36.6 225.5,36.6 226.5,36.5 227.5,36.5 228.5,36.5 229.5,36.5 230.5,36.5 231.5,36.5 232.5,36.5 233.5,36.4 234.5,36.4 235.5,36.4 236.5,36.4 237.5,36.4 238.5,36.4 239.5,36.4 240.5,36.4 241.5,36.4 242.5,36.4 243.5,36.3 244.5,36.3 245.5,36.3 246.5,36.3 247.5,36.3 248.5,36.3 249.5,36.3 250.5,36.3 251.5,36.3 252.5,36.3 253.5,36.3 254.5,36.3 255.5,36.3 256.5,36.2 257.5,36.2 258.5,36.2 259.5,36.2 260.5,36.2 261.5,36.2 262.5,36.2 263.5,36.2 264.5,36.2 265.5,36.2 266.5,36.2 267.5,36.2 268.5,36.2 269.5,36.2 270.5,36.2 271.5,36.2 272.5,36.2 273.5,36.2 274.5,36.2 275.5,36.2 276.5,36.1 277.5,36.1 278.5,36.1 279.5,36.1 280.5,36.1 281.5,36.1 282.5,36.1 283.5,36.1 284.5,36.1 285.5,36.1 286.5,36.1 287.5,36.1 288.5,36.1 289.5,36.1 290.5,36.1 291.5,36.1 292.5,36.1 293.5,36.1 294.5,36.1 295.5,36.1 296.5,36.1 297.5,36.1 298.5,36.1 299.5,36.1 300.5,36.1 301.5,36.1 302.5,36.1 303.5,36.1 304.5,36.1 305.5,36.1 306.5,36.1 307.5,36.1 308.5,36.1 309.5,36.1 310.5,36.1 311.5,36.1 312.5,36.1 313.5,36.1 314.5,36.1 315.5,36.1 316.5,36.1 317.5,36.1 318.5,36.0 319.5,36.0 320.5,36.0 321.5,36.0 322.5,36.0 323.5,36.0 324.5,36.0 325.5,36.0 326.5,36.0 327.5,36.0 328.5,36.0 329.5,36.0 330.5,36.0 331.5,36.0 332.5,36.0 333.5,36.0 334.5,36.0 335.5,36.0 336.5,36.0 337.5,36.0 338.5,86.8 339.5,97.3 341.5,109.5 345.5,114.8 357.5,118.3 387.5,120.9 427.5,122.6 445.5,123.5" fill="none" stroke="#ff0000" stroke-width="1.2" shape-rendering="crispEdges"/><polygon points="2,3 15,3 8.5,9.3" fill="#ff00ff"/><rect x="0" y="1" width="17" height="1" fill="#00ffff"/><rect x="1" y="2" width="15" height="1" fill="#00ffff"/><rect x="6" y="2" width="3" height="6" fill="#000"/><rect x="7" y="3" width="2" height="1" fill="#ff0"/><rect x="7" y="5" width="1" height="1" fill="#ff0"/><rect x="9" y="5" width="1" height="1" fill="#0ff"/><rect x="7" y="7" width="3" height="1" fill="#0ff"/><circle cx="8.5" cy="124.5" r="3" fill="none" stroke="#ff00ff" stroke-width="1"/></svg></div>
<div style="position:absolute;left:1px;top:280px;width:554px;height:2px;background:#e8e8e8"></div>
<div style="position:absolute;left:1px;top:282px;width:554px;height:1px;background:#a0a0a0"></div>
<div style="position:absolute;left:1px;top:283px;width:554px;height:13px;background:#f0f0f0"></div>
<div style="position:absolute;left:18px;top:284px;width:514px;height:11px;background:#cdcdcd"></div>
<svg style="position:absolute;left:5px;top:285px" width="9" height="10"><polyline points="7,1 2.5,4.5 7,8" fill="none" stroke="#505050" stroke-width="2"/></svg>
<div class="panel" style="left:2px;top:300px;width:58px;height:58px"></div>
<div class="t" style="left:7px;top:308.48px;font-size:11px;line-height:12.65px;color:#000;">T1</div>
<div class="t" style="left:7px;top:322.58px;font-size:11px;line-height:12.65px;color:#000;">T2</div>
<div class="t" style="left:7px;top:342.68px;font-size:11px;line-height:12.65px;color:#000;">T2-T1</div>
<div class="b" style="left:27px;top:307px;width:13px;height:16px"><svg style="position:absolute;left:1px;top:2px" width="10" height="10"><polygon points="1,5 5,1 5,3.5 9,3.5 9,6.5 5,6.5 5,9" fill="#000"/></svg></div>
<div class="b" style="left:44px;top:307px;width:13px;height:16px"><svg style="position:absolute;left:1px;top:2px" width="10" height="10"><polygon points="9,5 5,1 5,3.5 1,3.5 1,6.5 5,6.5 5,9" fill="#000"/></svg></div>
<div class="b" style="left:27px;top:325px;width:13px;height:16px"><svg style="position:absolute;left:1px;top:2px" width="10" height="10"><polygon points="1,5 5,1 5,3.5 9,3.5 9,6.5 5,6.5 5,9" fill="#000"/></svg></div>
<div class="b" style="left:44px;top:325px;width:13px;height:16px"><svg style="position:absolute;left:1px;top:2px" width="10" height="10"><polygon points="9,5 5,1 5,3.5 1,3.5 1,6.5 5,6.5 5,9" fill="#000"/></svg></div>
<div class="data" style="left:61px;top:300px;width:322px;height:58px"></div>
<div class="t" style="left:86.4px;top:302.78px;font-size:11px;line-height:12.65px;color:#000;">Time</div>
<div class="t" style="left:151.7px;top:302.78px;font-size:11px;line-height:12.65px;color:#000;">Channel_A</div>
<div class="t" style="left:231px;top:302.78px;font-size:11px;line-height:12.65px;color:#000;">Channel_B</div>
<div class="t" style="left:77.6px;top:315.68px;font-size:11px;line-height:12.65px;color:#000;">0.000 s</div>
<div class="t" style="left:77.6px;top:328.68px;font-size:11px;line-height:12.65px;color:#000;">0.000 s</div>
<div class="t" style="left:77.6px;top:341.48px;font-size:11px;line-height:12.65px;color:#000;">0.000 s</div>
<div class="t" style="left:152.1px;top:315.68px;font-size:11px;line-height:12.65px;color:#000;">21.548 uV</div>
<div class="t" style="left:152.1px;top:328.68px;font-size:11px;line-height:12.65px;color:#000;">21.548 uV</div>
<div class="t" style="left:158px;top:341.48px;font-size:11px;line-height:12.65px;color:#000;">0.000 V</div>
<div class="b" style="left:392px;top:307px;width:61px;height:21px;line-height:19px;font-size:11px;">Reverse</div>
<div class="b" style="left:392px;top:335px;width:61px;height:21px;line-height:19px;font-size:11px;">Save</div>
<div class="t" style="left:461px;top:348.88px;font-size:11px;line-height:12.65px;color:#000;">Ext. trigger</div>
<div class="radio" style="left:520.5px;top:350.0px"></div>
<div class="gb" style="left:1px;top:372px;width:131px;height:72px"></div><div class="gbgap" style="left:7px;top:370px;width:51px;height:5px"></div>
<div class="t" style="left:10px;top:367.28px;font-size:11px;line-height:12.65px;color:#000;">Timebase</div>
<div class="t" style="left:3.7px;top:384.68px;font-size:11px;line-height:12.65px;color:#000;">Scale:</div>
<div class="inp" style="left:40px;top:379px;width:87px;height:20px;line-height:18px;padding-left:6px;">100 ms/Div</div>
<div class="t" style="left:3.7px;top:405.18px;font-size:11px;line-height:12.65px;color:#000;">X pos.(Div):</div>
<div class="inp" style="left:65px;top:400px;width:62px;height:20px;line-height:18px;padding-left:5px;">0</div>
<div class="b sel" style="left:9px;top:424px;width:24px;height:18px;line-height:16px;font-size:11px;">Y/T</div>
<div class="b" style="left:35px;top:424px;width:26px;height:18px;line-height:16px;font-size:11px;">Add</div>
<div class="b" style="left:65px;top:424px;width:26px;height:18px;line-height:16px;font-size:11px;">B/A</div>
<div class="b" style="left:93px;top:424px;width:28px;height:18px;line-height:16px;font-size:11px;">A/B</div>
<div class="gb" style="left:134px;top:372px;width:127px;height:72px"></div><div class="gbgap" style="left:139px;top:370px;width:54px;height:5px"></div>
<div class="t" style="left:142px;top:367.28px;font-size:11px;line-height:12.65px;color:#000;">Channel A</div>
<div class="t" style="left:135.7px;top:384.68px;font-size:11px;line-height:12.65px;color:#000;">Scale:</div>
<div class="inp" style="left:172px;top:379px;width:87px;height:20px;line-height:18px;padding-left:5px;">2&nbsp; V/Div</div>
<div class="t" style="left:135.7px;top:405.18px;font-size:11px;line-height:12.65px;color:#000;">Y pos.(Div):</div>
<div class="inp" style="left:197px;top:400px;width:62px;height:20px;line-height:18px;padding-left:5px;">0</div>
<div class="b" style="left:137px;top:424px;width:23px;height:18px;line-height:16px;font-size:11px;">AC</div>
<div class="b" style="left:162px;top:424px;width:25px;height:18px;line-height:16px;font-size:11px;">0</div>
<div class="b sel" style="left:189px;top:424px;width:25px;height:18px;line-height:16px;font-size:11px;">DC</div>
<div class="radio" style="left:240.9px;top:424.7px"><div style="position:absolute;left:2px;top:2px;width:7px;height:7px;border-radius:50%;background:#c8c8c8"></div></div>
<div class="gb" style="left:263px;top:372px;width:128px;height:72px"></div><div class="gbgap" style="left:268px;top:370px;width:54px;height:5px"></div>
<div class="t" style="left:270.6px;top:367.28px;font-size:11px;line-height:12.65px;color:#000;">Channel B</div>
<div class="t" style="left:265px;top:384.68px;font-size:11px;line-height:12.65px;color:#000;">Scale:</div>
<div class="inp" style="left:302px;top:379px;width:87px;height:20px;line-height:18px;padding-left:5px;">5&nbsp; V/Div</div>
<div class="t" style="left:265px;top:405.18px;font-size:11px;line-height:12.65px;color:#000;">Y pos.(Div):</div>
<div class="inp" style="left:328px;top:400px;width:61px;height:20px;line-height:18px;padding-left:5px;">0</div>
<div class="b" style="left:267px;top:426px;width:24px;height:17px;line-height:15px;font-size:11px;">AC</div>
<div class="b" style="left:293px;top:426px;width:21px;height:17px;line-height:15px;font-size:11px;">0</div>
<div class="b sel" style="left:317px;top:426px;width:25px;height:17px;line-height:15px;font-size:11px;">DC</div>
<div class="b" style="left:344px;top:426px;width:17px;height:17px;line-height:15px;font-size:11px;">-</div>
<div class="radio" style="left:375.5px;top:426.5px"></div>
<div class="gb" style="left:393px;top:372px;width:167px;height:72px"></div><div class="gbgap" style="left:398px;top:370px;width:39px;height:5px"></div>
<div class="t" style="left:401.4px;top:367.28px;font-size:11px;line-height:12.65px;color:#000;">Trigger</div>
<div class="t" style="left:396.7px;top:384.78px;font-size:11px;line-height:12.65px;color:#000;">Edge:</div>
<div class="b sel" style="left:441px;top:384px;width:16px;height:15px;line-height:13px;font-size:11px;"><svg style="position:absolute;left:-1px;top:-1px" width="16" height="15"><polyline points="3,11.5 7.5,11.5 7.5,4.5 11.6,4.5" fill="none" stroke="#000" stroke-width="1.3"/><polyline points="5.3,8.8 7.5,7.2 9.7,8.8" fill="none" stroke="#000" stroke-width="1.1"/></svg></div>
<div class="b" style="left:459px;top:384px;width:16px;height:15px;line-height:13px;font-size:11px;"><svg style="position:absolute;left:-1px;top:-1px" width="16" height="15"><polyline points="3,3.5 7.5,3.5 7.5,10.5 11.8,10.5" fill="none" stroke="#000" stroke-width="1.3"/><polyline points="5.3,6.2 7.5,7.8 9.7,6.2" fill="none" stroke="#000" stroke-width="1.1"/></svg></div>
<div class="b sel" style="left:480px;top:384px;width:18px;height:17px;line-height:15px;font-size:11px;">A</div>
<div class="b dis" style="left:500px;top:384px;width:17px;height:17px;line-height:15px;font-size:11px;">B</div>
<div class="b dis" style="left:519px;top:384px;width:26px;height:17px;line-height:15px;font-size:11px;text-align:left;padding-left:2px;">Ext</div>
<div class="t" style="left:396.7px;top:404.68px;font-size:11px;line-height:12.65px;color:#000;">Level:</div>
<div class="inp" style="left:440px;top:404px;width:75px;height:19px;line-height:17px;padding-left:5px;line-height:23px;">0</div>
<div class="inp" style="left:516px;top:404px;width:44px;height:19px;line-height:17px;padding-left:7px;line-height:19px;">V</div>
<div class="b" style="left:398px;top:424px;width:37px;height:18px;line-height:16px;font-size:11px;">Single</div>
<div class="b" style="left:437px;top:424px;width:41px;height:18px;line-height:16px;font-size:11px;">Normal</div>
<div class="b" style="left:480px;top:424px;width:30px;height:18px;line-height:16px;font-size:11px;">Auto</div>
<div class="b sel" style="left:512px;top:424px;width:48px;height:18px;line-height:16px;font-size:11px;text-align:left;padding-left:2px;">None</div>
<svg style="position:absolute;left:531px;top:11px" width="12" height="12"><path d="M0.5,0.5 L10.5,10.5 M10.5,0.5 L0.5,10.5" stroke="#7a7a7a" stroke-width="1.1"/></svg>
<div class="wb" style="border-top-width:2px"></div>
</div>
<div class="win" style="left:1107px;top:448px;width:555px;height:447px">
<div class="title" style="left:1px;top:2px;width:555px;height:30px"></div>
<div class="t" style="left:9.5px;top:9.96px;font-size:12px;line-height:13.80px;color:#8c8c8c;letter-spacing:-0.2px;">Oscilloscope-XSC1</div>
<div style="position:absolute;left:1px;top:32px;width:555px;height:251px;background:#a0a0a0;border-top:1px solid #6e6e6e;border-left:1px solid #6e6e6e;box-sizing:border-box"></div>
<div style="position:absolute;left:4px;top:34px;width:555px;height:246px;overflow:hidden"><svg width="555" height="246" style="position:absolute;left:0;top:0"><rect x="0" y="0" width="555" height="246" fill="#000"/><line x1="61.5" y1="13" x2="61.5" y2="238" stroke="#d8d8d8" stroke-width="1" stroke-dasharray="3,3"/><line x1="114.5" y1="13" x2="114.5" y2="238" stroke="#d8d8d8" stroke-width="1" stroke-dasharray="3,3"/><line x1="166.5" y1="13" x2="166.5" y2="238" stroke="#d8d8d8" stroke-width="1" stroke-dasharray="3,3"/><line x1="219.5" y1="13" x2="219.5" y2="238" stroke="#d8d8d8" stroke-width="1" stroke-dasharray="3,3"/><line x1="272.5" y1="13" x2="272.5" y2="238" stroke="#d8d8d8" stroke-width="1" stroke-dasharray="3,3"/><line x1="325.5" y1="13" x2="325.5" y2="238" stroke="#d8d8d8" stroke-width="1" stroke-dasharray="3,3"/><line x1="378.5" y1="13" x2="378.5" y2="238" stroke="#d8d8d8" stroke-width="1" stroke-dasharray="3,3"/><line x1="430.5" y1="13" x2="430.5" y2="238" stroke="#d8d8d8" stroke-width="1" stroke-dasharray="3,3"/><line x1="483.5" y1="13" x2="483.5" y2="238" stroke="#d8d8d8" stroke-width="1" stroke-dasharray="3,3"/><line x1="536.5" y1="13" x2="536.5" y2="238" stroke="#d8d8d8" stroke-width="1" stroke-dasharray="3,3"/><line x1="9" y1="47.5" x2="555" y2="47.5" stroke="#d8d8d8" stroke-width="1" stroke-dasharray="3,3"/><line x1="9" y1="85.5" x2="555" y2="85.5" stroke="#d8d8d8" stroke-width="1" stroke-dasharray="3,3"/><line x1="9" y1="162.5" x2="555" y2="162.5" stroke="#d8d8d8" stroke-width="1" stroke-dasharray="3,3"/><line x1="9" y1="200.5" x2="555" y2="200.5" stroke="#d8d8d8" stroke-width="1" stroke-dasharray="3,3"/><rect x="9" y="9" width="555" height="1" fill="#fff"/><rect x="9" y="238" width="555" height="1" fill="#fff"/><rect x="272" y="6" width="1" height="3" fill="#fff"/><rect x="9" y="124" width="555" height="1" fill="#fff"/><path d="M9.5,125 v1.5 M14.5,125 v1.5 M19.5,125 v1.5 M24.5,125 v1.5 M29.5,125 v1.5 M34.5,125 v1.5 M39.5,125 v1.5 M44.5,125 v1.5 M49.5,125 v1.5 M54.5,125 v1.5 M59.5,125 v1.5 M64.5,125 v1.5 M69.5,125 v1.5 M74.5,125 v1.5 M79.5,125 v1.5 M84.5,125 v1.5 M89.5,125 v1.5 M94.5,125 v1.5 M99.5,125 v1.5 M104.5,125 v1.5 M109.5,125 v1.5 M114.5,125 v1.5 M119.5,125 v1.5 M124.5,125 v1.5 M129.5,125 v1.5 M134.5,125 v1.5 M139.5,125 v1.5 M144.5,125 v1.5 M149.5,125 v1.5 M154.5,125 v1.5 M159.5,125 v1.5 M164.5,125 v1.5 M169.5,125 v1.5 M174.5,125 v1.5 M179.5,125 v1.5 M184.5,125 v1.5 M189.5,125 v1.5 M194.5,125 v1.5 M199.5,125 v1.5 M204.5,125 v1.5 M209.5,125 v1.5 M214.5,125 v1.5 M219.5,125 v1.5 M224.5,125 v1.5 M229.5,125 v1.5 M234.5,125 v1.5 M239.5,125 v1.5 M244.5,125 v1.5 M249.5,125 v1.5 M254.5,125 v1.5 M259.5,125 v1.5 M264.5,125 v1.5 M269.5,125 v1.5 M274.5,125 v1.5 M279.5,125 v1.5 M284.5,125 v1.5 M289.5,125 v1.5 M294.5,125 v1.5 M299.5,125 v1.5 M304.5,125 v1.5 M309.5,125 v1.5 M314.5,125 v1.5 M319.5,125 v1.5 M324.5,125 v1.5 M329.5,125 v1.5 M334.5,125 v1.5 M339.5,125 v1.5 M344.5,125 v1.5 M349.5,125 v1.5 M354.5,125 v1.5 M359.5,125 v1.5 M364.5,125 v1.5 M369.5,125 v1.5 M374.5,125 v1.5 M379.5,125 v1.5 M384.5,125 v1.5 M389.5,125 v1.5 M394.5,125 v1.5 M399.5,125 v1.5 M404.5,125 v1.5 M409.5,125 v1.5 M414.5,125 v1.5 M419.5,125 v1.5 M424.5,125 v1.5 M429.5,125 v1.5 M434.5,125 v1.5 M439.5,125 v1.5 M444.5,125 v1.5 M449.5,125 v1.5 M454.5,125 v1.5 M459.5,125 v1.5 M464.5,125 v1.5 M469.5,125 v1.5 M474.5,125 v1.5 M479.5,125 v1.5 M484.5,125 v1.5 M489.5,125 v1.5 M494.5,125 v1.5 M499.5,125 v1.5 M504.5,125 v1.5 M509.5,125 v1.5 M514.5,125 v1.5 M519.5,125 v1.5 M524.5,125 v1.5 M529.5,125 v1.5 M534.5,125 v1.5 M539.5,125 v1.5 M544.5,125 v1.5 M549.5,125 v1.5 M554.5,125 v1.5 " stroke="#bbb" stroke-width="1"/><rect x="8" y="9" width="1" height="229" fill="#00ff00"/><rect x="8" y="238" width="1" height="4" fill="#fff"/><polyline points="8.5,123.5 35.5,123.5 36.5,121.0 37.5,118.5 38.5,116.1 39.5,113.7 40.5,111.4 41.5,109.2 42.5,107.0 43.5,104.8 44.5,102.7 45.5,100.7 46.5,98.7 47.5,96.8 48.5,94.9 49.5,93.1 50.5,91.3 51.5,89.5 52.5,87.8 53.5,86.2 54.5,84.6 55.5,83.0 56.5,81.4 57.5,79.9 58.5,78.5 59.5,77.0 60.5,75.6 61.5,74.3 62.5,72.9 63.5,71.6 64.5,70.4 65.5,69.2 66.5,68.0 67.5,66.8 68.5,65.6 69.5,64.5 70.5,63.4 71.5,62.4 72.5,61.3 73.5,60.3 74.5,59.4 75.5,58.4 76.5,57.5 77.5,56.5 78.5,55.7 79.5,54.8 80.5,53.9 81.5,53.1 82.5,52.3 83.5,51.5 84.5,50.8 85.5,50.0 86.5,49.3 87.5,48.6 88.5,47.9 89.5,47.2 90.5,46.5 91.5,45.9 92.5,45.3 93.5,44.7 94.5,44.1 95.5,43.5 96.5,42.9 97.5,42.4 98.5,41.8 99.5,41.3 100.5,40.8 101.5,40.3 102.5,39.8 103.5,39.3 104.5,38.9 105.5,38.4 106.5,38.0 107.5,37.5 108.5,37.1 109.5,36.7 110.5,36.3 111.5,35.9 112.5,35.5 113.5,35.2 114.5,34.8 115.5,34.4 116.5,34.1 117.5,33.8 118.5,33.4 119.5,33.1 120.5,32.8 121.5,32.5 122.5,32.2 123.5,31.9 124.5,31.6 125.5,31.4 126.5,31.1 127.5,30.8 128.5,30.6 129.5,30.3 130.5,30.1 131.5,29.8 132.5,29.6 133.5,29.4 134.5,29.2 135.5,29.0 136.5,28.7 137.5,28.5 138.5,28.3 139.5,28.2 140.5,28.0 141.5,27.8 142.5,27.6 143.5,27.4 144.5,27.3 145.5,27.1 146.5,26.9 147.5,26.8 148.5,26.6 149.5,26.5 150.5,26.3 151.5,26.2 152.5,26.0 153.5,25.9 154.5,25.8 155.5,25.6 156.5,25.5 157.5,25.4 158.5,25.3 159.5,25.1 160.5,25.0 161.5,24.9 162.5,24.8 163.5,24.7 164.5,24.6 165.5,24.5 166.5,24.4 167.5,24.3 168.5,24.2 169.5,24.1 170.5,24.0 171.5,23.9 172.5,23.9 173.5,23.8 174.5,23.7 175.5,23.6 176.5,23.5 177.5,23.5 178.5,23.4 179.5,23.3 180.5,23.2 181.5,23.2 182.5,23.1 183.5,23.0 184.5,23.0 185.5,22.9 186.5,22.9 187.5,22.8 188.5,22.7 189.5,22.7 190.5,22.6 191.5,22.6 192.5,22.5 193.5,22.5 194.5,22.4 195.5,22.4 196.5,22.3 197.5,22.3 198.5,22.3 199.5,22.2 200.5,22.2 201.5,22.1 202.5,22.1 203.5,22.0 204.5,22.0 205.5,22.0 206.5,21.9 207.5,21.9 208.5,21.9 209.5,21.8 210.5,21.8 211.5,21.8 212.5,21.7 213.5,21.7 214.5,21.7 215.5,21.6 216.5,21.6 217.5,21.6 218.5,21.6 219.5,21.5 220.5,21.5 221.5,21.5 222.5,21.5 223.5,21.4 224.5,21.4 225.5,21.4 226.5,21.4 227.5,21.3 228.5,21.3 229.5,21.3 230.5,21.3 231.5,21.3 232.5,21.2 233.5,21.2 234.5,21.2 235.5,21.2 236.5,21.2 237.5,21.2 238.5,21.1 239.5,21.1 240.5,21.1 241.5,21.1 242.5,21.1 243.5,21.1 244.5,21.1 245.5,21.0 246.5,21.0 247.5,21.0 248.5,21.0 249.5,21.0 250.5,21.0 251.5,21.0 252.5,21.0 253.5,20.9 254.5,20.9 255.5,20.9 256.5,20.9 257.5,20.9 258.5,20.9 259.5,20.9 260.5,20.9 261.5,20.9 262.5,20.9 263.5,20.8 264.5,20.8 265.5,20.8 266.5,20.8 267.5,20.8 268.5,20.8 269.5,20.8 270.5,20.8 271.5,20.8 272.5,20.8 273.5,20.8 274.5,20.8 275.5,20.8 276.5,20.7 277.5,20.7 278.5,20.7 279.5,20.7 280.5,20.7 281.5,20.7 282.5,20.7 283.5,20.7 284.5,20.7 285.5,20.7 286.5,20.7 287.5,20.7 288.5,20.7 289.5,20.7 290.5,20.7 291.5,20.7 292.5,20.7 293.5,20.7 294.5,20.7 295.5,20.7 296.5,20.7 297.5,20.6 298.5,20.6 299.5,20.6 300.5,20.6 301.5,20.6 302.5,20.6 303.5,20.6 304.5,20.6 305.5,20.6 306.5,20.6 307.5,20.6 308.5,20.6 309.5,20.6 310.5,20.6 311.5,20.6 312.5,20.6 313.5,20.6 314.5,20.6 315.5,20.6 316.5,20.6 317.5,20.6 318.5,20.6 319.5,20.6 320.5,20.6 321.5,20.6 322.5,20.6 323.5,20.6 324.5,20.6 325.5,20.6 326.5,20.6 327.5,20.6 328.5,20.6 329.5,20.6 330.5,20.6 331.5,20.6 332.5,20.6 333.5,20.6 334.5,20.6 335.5,20.6 336.5,20.6 337.5,20.6 339.5,66.9 341.5,102.9 344.5,117.3 347.5,123.5 445.5,123.5" fill="none" stroke="#ff0000" stroke-width="1.2" shape-rendering="crispEdges"/><polygon points="2,3 15,3 8.5,9.3" fill="#ff00ff"/><rect x="0" y="1" width="17" height="1" fill="#00ffff"/><rect x="1" y="2" width="15" height="1" fill="#00ffff"/><rect x="6" y="2" width="3" height="6" fill="#000"/><rect x="7" y="3" width="2" height="1" fill="#ff0"/><rect x="7" y="5" width="1" height="1" fill="#ff0"/><rect x="9" y="5" width="1" height="1" fill="#0ff"/><rect x="7" y="7" width="3" height="1" fill="#0ff"/><circle cx="8.5" cy="124.5" r="3" fill="none" stroke="#ff00ff" stroke-width="1"/></svg></div>
<div style="position:absolute;left:1px;top:280px;width:555px;height:2px;background:#e8e8e8"></div>
<div style="position:absolute;left:1px;top:282px;width:555px;height:1px;background:#a0a0a0"></div>
<div style="position:absolute;left:1px;top:283px;width:555px;height:13px;background:#f0f0f0"></div>
<div style="position:absolute;left:18px;top:284px;width:515px;height:11px;background:#cdcdcd"></div>
<svg style="position:absolute;left:5px;top:285px" width="9" height="10"><polyline points="7,1 2.5,4.5 7,8" fill="none" stroke="#505050" stroke-width="2"/></svg>
<div class="panel" style="left:2px;top:300px;width:58px;height:58px"></div>
<div class="t" style="left:7px;top:308.48px;font-size:11px;line-height:12.65px;color:#000;">T1</div>
<div class="t" style="left:7px;top:322.58px;font-size:11px;line-height:12.65px;color:#000;">T2</div>
<div class="t" style="left:7px;top:342.68px;font-size:11px;line-height:12.65px;color:#000;">T2-T1</div>
<div class="b" style="left:27px;top:307px;width:13px;height:16px"><svg style="position:absolute;left:1px;top:2px" width="10" height="10"><polygon points="1,5 5,1 5,3.5 9,3.5 9,6.5 5,6.5 5,9" fill="#000"/></svg></div>
<div class="b" style="left:44px;top:307px;width:13px;height:16px"><svg style="position:absolute;left:1px;top:2px" width="10" height="10"><polygon points="9,5 5,1 5,3.5 1,3.5 1,6.5 5,6.5 5,9" fill="#000"/></svg></div>
<div class="b" style="left:27px;top:325px;width:13px;height:16px"><svg style="position:absolute;left:1px;top:2px" width="10" height="10"><polygon points="1,5 5,1 5,3.5 9,3.5 9,6.5 5,6.5 5,9" fill="#000"/></svg></div>
<div class="b" style="left:44px;top:325px;width:13px;height:16px"><svg style="position:absolute;left:1px;top:2px" width="10" height="10"><polygon points="9,5 5,1 5,3.5 1,3.5 1,6.5 5,6.5 5,9" fill="#000"/></svg></div>
<div class="data" style="left:61px;top:300px;width:322px;height:58px"></div>
<div class="t" style="left:86.4px;top:302.78px;font-size:11px;line-height:12.65px;color:#000;">Time</div>
<div class="t" style="left:151.7px;top:302.78px;font-size:11px;line-height:12.65px;color:#000;">Channel_A</div>
<div class="t" style="left:231px;top:302.78px;font-size:11px;line-height:12.65px;color:#000;">Channel_B</div>
<div class="b" style="left:392px;top:307px;width:61px;height:21px;line-height:19px;font-size:11px;">Reverse</div>
<div class="b" style="left:392px;top:335px;width:61px;height:21px;line-height:19px;font-size:11px;">Save</div>
<div class="t" style="left:461px;top:348.88px;font-size:11px;line-height:12.65px;color:#000;">Ext. trigger</div>
<div class="radio" style="left:520.5px;top:350.0px"></div>
<div class="gb" style="left:1px;top:372px;width:131px;height:72px"></div><div class="gbgap" style="left:7px;top:370px;width:51px;height:5px"></div>
<div class="t" style="left:10px;top:367.28px;font-size:11px;line-height:12.65px;color:#000;">Timebase</div>
<div class="t" style="left:3.7px;top:384.68px;font-size:11px;line-height:12.65px;color:#000;">Scale:</div>
<div class="inp" style="left:40px;top:379px;width:87px;height:20px;line-height:18px;padding-left:6px;">100 ms/Div</div>
<div class="t" style="left:3.7px;top:405.18px;font-size:11px;line-height:12.65px;color:#000;">X pos.(Div):</div>
<div class="inp" style="left:65px;top:400px;width:62px;height:20px;line-height:18px;padding-left:5px;">0</div>
<div class="b sel" style="left:9px;top:424px;width:24px;height:18px;line-height:16px;font-size:11px;">Y/T</div>
<div class="b" style="left:35px;top:424px;width:26px;height:18px;line-height:16px;font-size:11px;">Add</div>
<div class="b" style="left:65px;top:424px;width:26px;height:18px;line-height:16px;font-size:11px;">B/A</div>
<div class="b" style="left:93px;top:424px;width:28px;height:18px;line-height:16px;font-size:11px;">A/B</div>
<div class="gb" style="left:134px;top:372px;width:127px;height:72px"></div><div class="gbgap" style="left:139px;top:370px;width:54px;height:5px"></div>
<div class="t" style="left:142px;top:367.28px;font-size:11px;line-height:12.65px;color:#000;">Channel A</div>
<div class="t" style="left:135.7px;top:384.68px;font-size:11px;line-height:12.65px;color:#000;">Scale:</div>
<div class="inp" style="left:172px;top:379px;width:87px;height:20px;line-height:18px;padding-left:5px;">5&nbsp; V/Div</div>
<div class="t" style="left:135.7px;top:405.18px;font-size:11px;line-height:12.65px;color:#000;">Y pos.(Div):</div>
<div class="inp" style="left:197px;top:400px;width:62px;height:20px;line-height:18px;padding-left:5px;">0</div>
<div class="b" style="left:137px;top:424px;width:23px;height:18px;line-height:16px;font-size:11px;">AC</div>
<div class="b" style="left:162px;top:424px;width:25px;height:18px;line-height:16px;font-size:11px;">0</div>
<div class="b sel" style="left:189px;top:424px;width:25px;height:18px;line-height:16px;font-size:11px;">DC</div>
<div class="radio" style="left:240.9px;top:424.7px"><div style="position:absolute;left:2px;top:2px;width:7px;height:7px;border-radius:50%;background:#c8c8c8"></div></div>
<div class="gb" style="left:263px;top:372px;width:128px;height:72px"></div><div class="gbgap" style="left:268px;top:370px;width:54px;height:5px"></div>
<div class="t" style="left:270.6px;top:367.28px;font-size:11px;line-height:12.65px;color:#000;">Channel B</div>
<div class="t" style="left:265px;top:384.68px;font-size:11px;line-height:12.65px;color:#000;">Scale:</div>
<div class="inp" style="left:302px;top:379px;width:87px;height:20px;line-height:18px;padding-left:5px;">5&nbsp; V/Div</div>
<div class="t" style="left:265px;top:405.18px;font-size:11px;line-height:12.65px;color:#000;">Y pos.(Div):</div>
<div class="inp" style="left:328px;top:400px;width:61px;height:20px;line-height:18px;padding-left:5px;">0</div>
<div class="b" style="left:267px;top:426px;width:24px;height:17px;line-height:15px;font-size:11px;">AC</div>
<div class="b" style="left:293px;top:426px;width:21px;height:17px;line-height:15px;font-size:11px;">0</div>
<div class="b sel" style="left:317px;top:426px;width:25px;height:17px;line-height:15px;font-size:11px;">DC</div>
<div class="b" style="left:344px;top:426px;width:17px;height:17px;line-height:15px;font-size:11px;">-</div>
<div class="radio" style="left:375.5px;top:426.5px"></div>
<div class="gb" style="left:393px;top:372px;width:167px;height:72px"></div><div class="gbgap" style="left:398px;top:370px;width:39px;height:5px"></div>
<div class="t" style="left:401.4px;top:367.28px;font-size:11px;line-height:12.65px;color:#000;">Trigger</div>
<div class="t" style="left:396.7px;top:384.78px;font-size:11px;line-height:12.65px;color:#000;">Edge:</div>
<div class="b sel" style="left:441px;top:384px;width:16px;height:15px;line-height:13px;font-size:11px;"><svg style="position:absolute;left:-1px;top:-1px" width="16" height="15"><polyline points="3,11.5 7.5,11.5 7.5,4.5 11.6,4.5" fill="none" stroke="#000" stroke-width="1.3"/><polyline points="5.3,8.8 7.5,7.2 9.7,8.8" fill="none" stroke="#000" stroke-width="1.1"/></svg></div>
<div class="b" style="left:459px;top:384px;width:16px;height:15px;line-height:13px;font-size:11px;"><svg style="position:absolute;left:-1px;top:-1px" width="16" height="15"><polyline points="3,3.5 7.5,3.5 7.5,10.5 11.8,10.5" fill="none" stroke="#000" stroke-width="1.3"/><polyline points="5.3,6.2 7.5,7.8 9.7,6.2" fill="none" stroke="#000" stroke-width="1.1"/></svg></div>
<div class="b sel" style="left:480px;top:384px;width:18px;height:17px;line-height:15px;font-size:11px;">A</div>
<div class="b dis" style="left:500px;top:384px;width:17px;height:17px;line-height:15px;font-size:11px;">B</div>
<div class="b dis" style="left:519px;top:384px;width:26px;height:17px;line-height:15px;font-size:11px;text-align:left;padding-left:2px;">Ext</div>
<div class="t" style="left:396.7px;top:404.68px;font-size:11px;line-height:12.65px;color:#000;">Level:</div>
<div class="inp" style="left:440px;top:404px;width:75px;height:19px;line-height:17px;padding-left:5px;line-height:23px;">0</div>
<div class="inp" style="left:516px;top:404px;width:44px;height:19px;line-height:17px;padding-left:7px;line-height:19px;">V</div>
<div class="b" style="left:398px;top:424px;width:37px;height:18px;line-height:16px;font-size:11px;">Single</div>
<div class="b" style="left:437px;top:424px;width:41px;height:18px;line-height:16px;font-size:11px;">Normal</div>
<div class="b" style="left:480px;top:424px;width:30px;height:18px;line-height:16px;font-size:11px;">Auto</div>
<div class="b sel" style="left:512px;top:424px;width:48px;height:18px;line-height:16px;font-size:11px;text-align:left;padding-left:2px;">None</div>
<svg style="position:absolute;left:532px;top:11px" width="12" height="12"><path d="M0.5,0.5 L10.5,10.5 M10.5,0.5 L0.5,10.5" stroke="#7a7a7a" stroke-width="1.1"/></svg>
<div class="wb" style="border-top-width:2px"></div>
</div>
<div style="position:absolute;left:1476px;top:446px;width:166px;height:4px;background:linear-gradient(90deg,#3e3e3e,#7a7a7a 40%,#808080)"></div>
</body></html>
